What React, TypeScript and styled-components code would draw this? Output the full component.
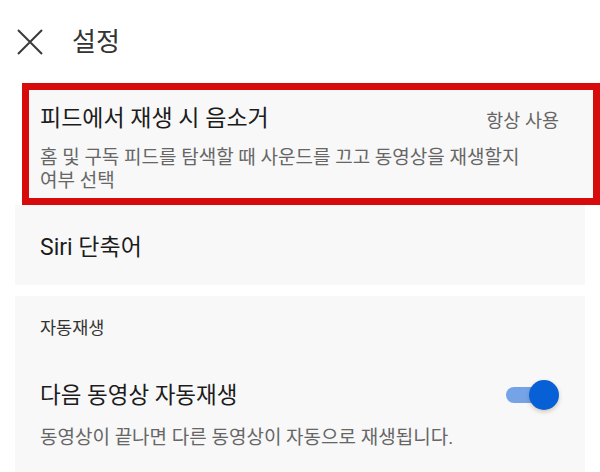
import React from "react";
import styled, { createGlobalStyle } from "styled-components";

const GlobalStyle = createGlobalStyle`
  body {
    margin: 0;
    background: #ffffff;
    font-family: Roboto, "Noto Sans CJK KR", sans-serif;
    color: #222;
  }
`;

const Page = styled.div`
  width: 600px;
  height: 472px;
  overflow: hidden;
  background: #fff;
`;

const Header = styled.header`
  display: flex;
  align-items: center;
  height: 83px;
  padding-left: 17px;
  box-sizing: border-box;
`;

const CloseButton = styled.button`
  display: flex;
  width: 26px;
  height: 26px;
  padding: 0;
  border: 0;
  background: none;
  margin-right: 29px;
`;

const Title = styled.h1`
  margin: 0;
  font-size: 26px;
  font-weight: 400;
  color: #333;
  line-height: 1;
`;

const Highlight = styled.section`
  margin-left: 22px;
  border: 7px solid #d60b0b;
  height: 122px;
  box-sizing: border-box;
  background: #f8f8f8;
  padding: 14px 34px 0 11px;
`;

const Row = styled.div`
  display: flex;
  align-items: center;
  justify-content: space-between;
`;

const Label = styled.div<{ $size?: number }>`
  font-size: ${(p) => p.$size ?? 22.5}px;
  color: #1c1c1c;
  line-height: 30px;
`;

const Value = styled.div`
  font-size: 18.5px;
  color: #666;
`;

const Desc = styled.p`
  margin: 12px 0 0;
  max-width: 495px;
  font-size: 19px;
  line-height: 23px;
  color: #666;
`;

const Card = styled.div<{ $height?: number }>`
  margin: 0 15px;
  background: #f8f8f8;
  box-sizing: border-box;
  padding: 0 25px;
  ${(p) => (p.$height ? `height: ${p.$height}px;` : "")}
`;

const SiriCard = styled(Card)`
  display: flex;
  align-items: center;
  padding-top: 6px;
  margin-bottom: 11px;
`;

const SectionTitle = styled.div`
  font-size: 17.5px;
  color: #333;
  padding-top: 20px;
  line-height: 24px;
`;

const AutoRow = styled(Row)`
  margin-top: 40px;
`;

const Toggle = styled.div`
  position: relative;
  width: 53px;
  height: 30px;
  margin-right: 1px;
`;

const Track = styled.div`
  position: absolute;
  left: 0;
  top: 7px;
  width: 46px;
  height: 16px;
  border-radius: 8px;
  background: #74a3e8;
`;

const Thumb = styled.div`
  position: absolute;
  right: 0;
  top: 0;
  width: 30px;
  height: 30px;
  border-radius: 50%;
  background: #0860d6;
  box-shadow: 0 2px 4px rgba(120, 80, 40, 0.3);
`;

const AutoDesc = styled(Desc)`
  margin-top: 16px;
`;

export default function App() {
  return (
    <Page>
      <GlobalStyle />
      <Header>
        <CloseButton aria-label="닫기">
          <svg width="26" height="26" viewBox="0 0 26 26">
            <path d="M1 1 L25 25 M25 1 L1 25" stroke="#3a3a3a" strokeWidth="2" fill="none" />
          </svg>
        </CloseButton>
        <Title>설정</Title>
      </Header>

      <Highlight>
        <Row>
          <Label $size={23}>피드에서 재생 시 음소거</Label>
          <Value>항상 사용</Value>
        </Row>
        <Desc>홈 및 구독 피드를 탐색할 때 사운드를 끄고 동영상을 재생할지 여부 선택</Desc>
      </Highlight>

      <SiriCard $height={80}>
        <Label $size={23}>Siri 단축어</Label>
      </SiriCard>

      <Card $height={176}>
        <SectionTitle>자동재생</SectionTitle>
        <AutoRow>
          <Label>다음 동영상 자동재생</Label>
          <Toggle>
            <Track />
            <Thumb />
          </Toggle>
        </AutoRow>
        <AutoDesc>동영상이 끝나면 다른 동영상이 자동으로 재생됩니다.</AutoDesc>
      </Card>
    </Page>
  );
}
